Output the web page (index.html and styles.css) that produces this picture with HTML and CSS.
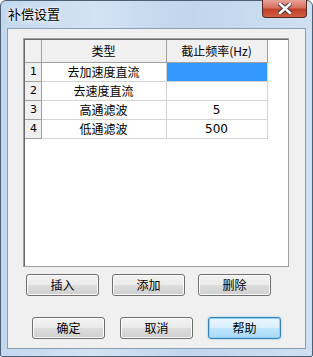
FILE: index.html
```html
<!DOCTYPE html>
<html lang="zh">
<head>
    <meta charset="UTF-8">
    <title>补偿设置</title>
    <link rel="stylesheet" href="styles.css">
</head>
<body>
    <div class="window">
        <div class="titlebar">
            <span class="title">补偿设置</span>
            <span class="close-btn">
                <svg width="14" height="11" viewBox="0 0 14 11">
                    <path d="M2 1 L12 10 M12 1 L2 10" stroke="#3a3a3a" stroke-width="4.4" stroke-linecap="square"/>
                    <path d="M2 1 L12 10 M12 1 L2 10" stroke="#ffffff" stroke-width="2.6" stroke-linecap="square"/>
                </svg>
            </span>
        </div>

        <div class="client">
            <div class="grid">
                <table class="grid-table">
                    <colgroup>
                        <col class="col-num">
                        <col class="col-type">
                        <col class="col-freq">
                    </colgroup>
                    <tr class="head">
                        <th></th>
                        <th>类型</th>
                        <th>截止频率(Hz)</th>
                    </tr>
                    <tr>
                        <th class="row-num">1</th>
                        <td>去加速度直流</td>
                        <td class="selected"></td>
                    </tr>
                    <tr>
                        <th class="row-num">2</th>
                        <td>去速度直流</td>
                        <td></td>
                    </tr>
                    <tr>
                        <th class="row-num">3</th>
                        <td>高通滤波</td>
                        <td class="num">5</td>
                    </tr>
                    <tr>
                        <th class="row-num">4</th>
                        <td>低通滤波</td>
                        <td class="num">500</td>
                    </tr>
                </table>
            </div>

            <div class="btn-row edit-row">
                <button class="btn">插入</button>
                <button class="btn">添加</button>
                <button class="btn">删除</button>
            </div>

            <div class="btn-row dialog-row">
                <button class="btn">确定</button>
                <button class="btn">取消</button>
                <button class="btn btn-default">帮助</button>
            </div>
        </div>
    </div>
</body>
</html>
```

FILE: styles.css
```css
/* 对话框窗口 */
html, body {
    margin: 0;
    padding: 0;
    background: #ffffff;
}

body {
    font-family: "Noto Sans CJK SC", "DejaVu Sans", sans-serif;
    font-size: 12px;
    color: #000;
}

.window {
    width: 313px;
    height: 357px;
    box-sizing: border-box;
    border: 1px solid #4d5f73;
    border-radius: 6px 6px 2px 2px;
    background: linear-gradient(90deg, #c3d8ee 0%, #d3e3f3 30%, #c0d6ec 60%, #cfe0f2 100%);
    display: flex;
    flex-direction: column;
}

.titlebar {
    height: 27px;
    display: flex;
    justify-content: space-between;
    align-items: flex-start;
    padding-left: 7px;
}

.title {
    margin-top: 4px;
    font-size: 13px;
    line-height: 18px;
    color: #000;
    text-shadow: 0 0 6px #ffffff, 0 0 3px #ffffff;
}

.close-btn {
    width: 45px;
    height: 18px;
    margin-top: -1px;
    margin-right: 5px;
    box-sizing: border-box;
    border: 1px solid #5b2a22;
    border-top: none;
    border-radius: 0 0 4px 4px;
    background: linear-gradient(180deg, #e8a397 0%, #d8705f 45%, #c0402b 55%, #cf5f43 100%);
    display: flex;
    align-items: center;
    justify-content: center;
}

.client {
    flex: 1;
    margin: 0 6px 7px 6px;
    border: 1px solid #8b9db0;
    background: #f0f0f0;
    padding: 9px 0 0 15px;
}

/* 表格 */
.grid {
    width: 266px;
    height: 229px;
    box-sizing: border-box;
    border: 1px solid #a0a0a0;
    box-shadow: inset 1px 1px 0 #696969;
    background: #ffffff;
    padding: 1px 0 0 1px;
}

.grid-table {
    border-collapse: collapse;
    table-layout: fixed;
}

.col-num { width: 16px; }
.col-type { width: 125px; }
.col-freq { width: 101px; }

.grid-table th,
.grid-table td {
    height: 18px;
    padding: 0;
    font-weight: normal;
    text-align: center;
    line-height: 18px;
    white-space: nowrap;
    overflow: hidden;
}

.grid-table th {
    background: #f0f0f0;
    border: 1px solid #a0a0a0;
}

.grid-table td {
    border: 1px solid #d4d4d4;
    border-left-color: #a0a0a0;
}

.grid-table .head th {
    height: 22px;
    line-height: 22px;
    border-top: none;
}

.grid-table tr > :first-child {
    border-left: none;
}

.grid-table .row-num {
    font-family: "DejaVu Sans", "Liberation Sans", sans-serif;
    font-size: 11px;
    text-align: left;
    padding-left: 5px;
}

.grid-table .selected {
    background: #3399ff;
}

.grid-table .num {
    font-family: "DejaVu Sans", "Liberation Sans", sans-serif;
    font-size: 12px;
}

/* 按钮 */
.btn-row {
    display: flex;
}

.edit-row {
    margin-top: 7px;
    padding-left: 3px;
    gap: 13px;
}

.dialog-row {
    margin-top: 21px;
    padding-left: 9px;
    gap: 15px;
}

.btn {
    width: 73px;
    height: 22px;
    box-sizing: border-box;
    border: 1px solid #707070;
    border-radius: 3px;
    background: linear-gradient(180deg, #f2f2f2 0%, #ebebeb 48%, #dddddd 52%, #cfcfcf 100%);
    box-shadow: inset 0 0 0 1px #fcfcfc;
    font-family: "Noto Sans CJK SC", sans-serif;
    font-size: 12px;
    line-height: 18px;
    padding: 0;
    color: #000;
}

.btn-default {
    border-color: #3c7fb1;
    background: linear-gradient(180deg, #eaf6fd 0%, #d9f0fc 48%, #bee6fd 52%, #a7d9f5 100%);
    box-shadow: inset 0 0 0 1px #8fd3f6, 0 0 2px #6cc3f0;
}
```
